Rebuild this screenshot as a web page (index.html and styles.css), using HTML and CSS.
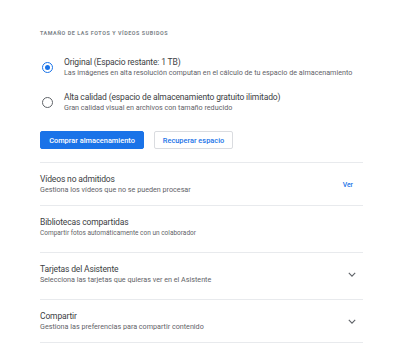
FILE: index.html
```html
<html>
<head>
	<meta charset="utf-8">
	<link rel="stylesheet" href="styles.css">
</head>
<body>
	<div class="page">
		<h2 class="section-title">Tamaño de las fotos y vídeos subidos</h2>

		<div class="radio-opt">
			<span class="radio checked"></span>
			<div class="opt-text">
				<div class="title">Original (Espacio restante: 1 TB)</div>
				<div class="sub">Las imágenes en alta resolución computan en el cálculo de tu espacio de almacenamiento</div>
			</div>
		</div>
		<div class="radio-opt">
			<span class="radio"></span>
			<div class="opt-text">
				<div class="title">Alta calidad (espacio de almacenamiento gratuito ilimitado)</div>
				<div class="sub">Gran calidad visual en archivos con tamaño reducido</div>
			</div>
		</div>

		<div class="buttons">
			<button class="btn primary">Comprar almacenamiento</button>
			<button class="btn outline">Recuperar espacio</button>
		</div>

		<div class="row">
			<div class="row-text">
				<div class="title">Vídeos no admitidos</div>
				<div class="sub">Gestiona los vídeos que no se pueden procesar</div>
			</div>
			<a class="link">Ver</a>
		</div>
		<div class="row tall">
			<div class="row-text">
				<div class="title">Bibliotecas compartidas</div>
				<div class="sub small">Compartir fotos automáticamente con un colaborador</div>
			</div>
		</div>
		<div class="row tall">
			<div class="row-text">
				<div class="title">Tarjetas del Asistente</div>
				<div class="sub">Selecciona las tarjetas que quieras ver en el Asistente</div>
			</div>
			<svg class="chevron" viewBox="0 0 10 6"><path d="M1 1 L5 5 L9 1" /></svg>
		</div>
		<div class="row">
			<div class="row-text">
				<div class="title">Compartir</div>
				<div class="sub">Gestiona las preferencias para compartir contenido</div>
			</div>
			<svg class="chevron" viewBox="0 0 10 6"><path d="M1 1 L5 5 L9 1" /></svg>
		</div>
	</div>
</body>
</html>
```

FILE: styles.css
```css
body {
	margin: 0;
	font-family: Roboto, "Liberation Sans", Arial, sans-serif;
	font-weight: 400;
	color: #3c4043;
	background: #fff;
}

.page {
	width: 323px;
	margin-left: 40px;
	padding-top: 29px;
}

.section-title {
	margin: 0;
	font-size: 5.4px;
	line-height: 8px;
	font-weight: 700;
	letter-spacing: 0.55px;
	text-transform: uppercase;
	color: #80868b;
}

.radio-opt {
	display: flex;
	align-items: center;
	margin-top: 20px;
}
.radio-opt + .radio-opt {
	margin-top: 14px;
}

.radio {
	box-sizing: border-box;
	width: 11px;
	height: 11px;
	margin: 0 11px 0 2px;
	border: 1.4px solid #5f6368;
	border-radius: 50%;
	flex: none;
	display: flex;
	align-items: center;
	justify-content: center;
}
.radio.checked {
	border-color: #1a73e8;
}
.radio.checked::after {
	content: "";
	width: 5px;
	height: 5px;
	border-radius: 50%;
	background: #1a73e8;
}

.title {
	font-size: 8.5px;
	font-weight: 400;
	line-height: 11px;
	letter-spacing: -0.15px;
	color: #3c4043;
}
.sub {
	font-size: 7.2px;
	font-weight: 400;
	line-height: 10px;
	color: #5f6368;
}
.sub.small {
	font-size: 6.5px;
}

.buttons {
	display: flex;
	gap: 10px;
	margin-top: 18px;
	padding-bottom: 13px;
	border-bottom: 1px solid #e8eaed;
}

.btn {
	height: 18px;
	padding: 0;
	border-radius: 2px;
	font-family: inherit;
	font-size: 7.4px;
	font-weight: 500;
}
.btn.primary {
	width: 104px;
	background: #1a73e8;
	border: 1px solid #1a73e8;
	color: #fff;
}
.btn.outline {
	width: 79px;
	background: #fff;
	border: 1px solid #dadce0;
	color: #1a73e8;
}

.row {
	display: flex;
	align-items: center;
	justify-content: space-between;
	padding: 11px 0 10px;
	border-bottom: 1px solid #e8eaed;
}
.row.tall {
	padding-bottom: 14px;
}

.link {
	margin-right: 10px;
	font-size: 6.8px;
	font-weight: 500;
	color: #1a73e8;
}

.chevron {
	width: 8px;
	height: 5px;
	margin-right: 7px;
	fill: none;
	stroke: #5f6368;
	stroke-width: 1.4;
}
```
